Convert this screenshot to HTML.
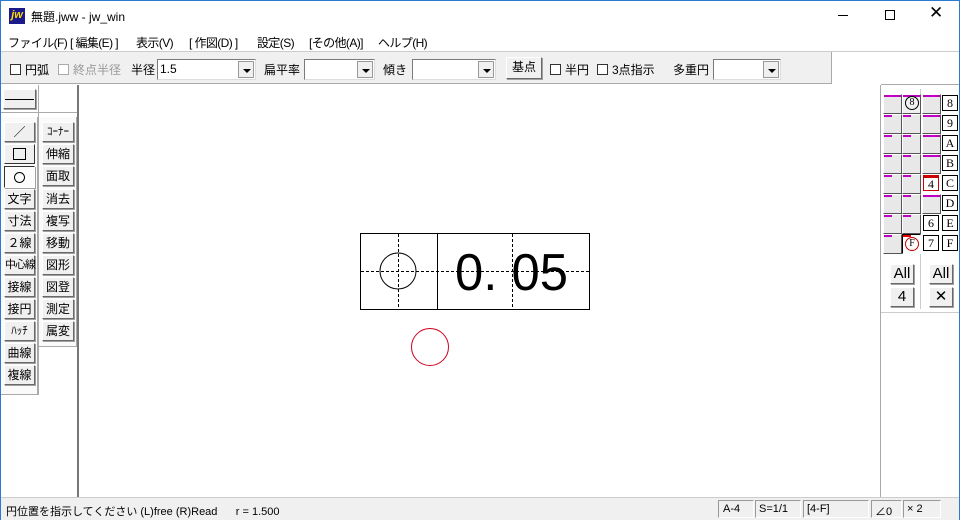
<!DOCTYPE html><html><head><meta charset="utf-8"><style>
*{margin:0;padding:0;box-sizing:border-box}
body{width:960px;height:520px;position:relative;overflow:hidden;background:#fff;font-family:"Liberation Sans","Noto Sans CJK JP",sans-serif;font-size:12px;color:#000}
.a{position:absolute}
.btn{position:absolute;background:#f0f0f0;border:1px solid;border-color:#fff #696969 #696969 #fff;box-shadow:1px 1px 0 #a0a0a0;text-align:center;font-size:12px;line-height:19px;white-space:nowrap}
.chk{display:inline-block;width:11px;height:11px;border:1px solid #333;background:#fff;vertical-align:-1px;margin-right:4px}
.cb{position:absolute;height:21px;background:#fff;border:1px solid #7a7a7a;border-right-color:#ddd;border-bottom-color:#ddd;font-size:12px;line-height:18px;padding-left:2px}
.cb i{position:absolute;right:1px;top:1px;width:16px;height:17px;background:#f0f0f0;border:1px solid #999}
.cb i:after{content:"";position:absolute;left:4px;top:7px;border:4px solid transparent;border-top:4px solid #000;border-bottom:0}
.r{position:absolute;width:19px;height:20px;background:#e8e8e8;border:1px solid;border-color:#fff #555 #555 #fff}
.p{position:absolute;top:0;left:0;height:2px;background:#c000c0}
.lb{position:absolute;width:16px;height:16px;border:1px solid #000;background:#fff;font-family:"Liberation Serif",serif;font-size:12px;line-height:14px;text-align:center}
.m{position:absolute;top:34px;letter-spacing:-0.6px;white-space:nowrap}
</style></head><body>
<div class="a" style="left:0;top:0;width:1px;height:520px;background:#2b79d0"></div>
<div class="a" style="right:0;top:0;width:1px;height:520px;background:#2b79d0"></div>
<div class="a" style="left:0;top:0;width:960px;height:1px;background:#2b79d0"></div>
<div class="a" style="left:9px;top:8px;width:16px;height:16px;background:#1a1a8a;color:#ffd700;font-weight:bold;font-style:italic;font-size:11px;line-height:15px;text-align:center">jw</div>
<div class="a" style="left:31px;top:8px;font-size:12px">無題.jww - jw_win</div>
<div class="a" style="left:838px;top:15px;width:10px;height:1px;background:#000"></div>
<div class="a" style="left:885px;top:10px;width:10px;height:10px;border:1px solid #000"></div>
<div class="a" style="left:929px;top:3px;font-size:17px;font-weight:300">✕</div>
<div class="m" style="left:8px">ファイル(F)</div>
<div class="m" style="left:70px">[ 編集(E) ]</div>
<div class="m" style="left:136px">表示(V)</div>
<div class="m" style="left:189px">[ 作図(D) ]</div>
<div class="m" style="left:257px">設定(S)</div>
<div class="m" style="left:309px">[その他(A)]</div>
<div class="m" style="left:378px">ヘルプ(H)</div>
<div class="a" style="left:1px;top:51px;width:958px;height:1px;background:#ccc"></div>
<div class="a" style="left:1px;top:52px;width:831px;height:32px;background:#f0f0f0;border-right:1px solid #aaa;border-bottom:1px solid #aaa"></div>
<div class="a" style="left:10px;top:61px"><span class="chk"></span>円弧</div>
<div class="a" style="left:58px;top:61px;color:#999"><span class="chk" style="border-color:#aaa"></span>終点半径</div>
<div class="a" style="left:131px;top:61px">半径</div>
<div class="cb" style="left:157px;top:59px;width:99px">1.5<i></i></div>
<div class="a" style="left:264px;top:61px">扁平率</div>
<div class="cb" style="left:304px;top:59px;width:71px"><i></i></div>
<div class="a" style="left:383px;top:61px">傾き</div>
<div class="cb" style="left:412px;top:59px;width:84px"><i></i></div>
<div class="btn" style="left:506px;top:57px;width:36px;height:22px;line-height:19px">基点</div>
<div class="a" style="left:550px;top:61px"><span class="chk"></span>半円</div>
<div class="a" style="left:597px;top:61px"><span class="chk"></span>3点指示</div>
<div class="a" style="left:673px;top:61px">多重円</div>
<div class="cb" style="left:713px;top:59px;width:68px"><i></i></div>
<div class="a" style="left:38px;top:85px;width:1px;height:310px;background:#aaa"></div>
<div class="a" style="left:1px;top:112px;width:76px;height:1px;background:#aaa"></div>
<div class="a" style="left:77px;top:85px;width:2px;height:412px;background:#777"></div>
<div class="btn" style="left:3px;top:89px;width:33px;height:20px"><div class="a" style="left:1px;top:9px;width:29px;height:1px;background:#000"></div></div>
<div class="a" style="left:1px;top:117px;width:37px;height:278px;border-right:1px solid #aaa;border-bottom:1px solid #aaa;background:#fafafa"></div>
<div class="a" style="left:39px;top:117px;width:38px;height:230px;border-right:1px solid #aaa;border-bottom:1px solid #aaa;background:#fafafa"></div>
<div class="btn" style="left:4px;top:122px;width:31px;height:20px">／</div>
<div class="btn" style="left:4px;top:144px;width:31px;height:20px;box-shadow:none;border-color:#fff #333 #333 #fff"><div class="a" style="left:8px;top:3px;width:13px;height:12px;border:1px solid #000"></div></div>
<div class="btn" style="left:4px;top:166px;width:31px;height:22px;background:#fcfcfc;border-color:#333 #fff #fff #333"><div class="a" style="left:9px;top:5px;width:11px;height:11px;border:1px solid #000;border-radius:50%"></div></div>
<div class="btn" style="left:4px;top:189px;width:31px;height:20px">文字</div>
<div class="btn" style="left:4px;top:211px;width:31px;height:20px">寸法</div>
<div class="btn" style="left:4px;top:233px;width:31px;height:20px">２線</div>
<div class="btn" style="left:4px;top:255px;width:31px;height:20px;font-size:11px;letter-spacing:-1px">中心線</div>
<div class="btn" style="left:4px;top:277px;width:31px;height:20px">接線</div>
<div class="btn" style="left:4px;top:299px;width:31px;height:20px">接円</div>
<div class="btn" style="left:4px;top:321px;width:31px;height:20px;font-size:11px">ﾊｯﾁ</div>
<div class="btn" style="left:4px;top:343px;width:31px;height:20px">曲線</div>
<div class="btn" style="left:4px;top:365px;width:31px;height:20px">複線</div>
<div class="btn" style="left:42px;top:122px;width:32px;height:20px;font-size:11px">ｺｰﾅｰ</div>
<div class="btn" style="left:42px;top:144px;width:32px;height:20px">伸縮</div>
<div class="btn" style="left:42px;top:166px;width:32px;height:20px">面取</div>
<div class="btn" style="left:42px;top:189px;width:32px;height:20px">消去</div>
<div class="btn" style="left:42px;top:211px;width:32px;height:20px">複写</div>
<div class="btn" style="left:42px;top:233px;width:32px;height:20px">移動</div>
<div class="btn" style="left:42px;top:255px;width:32px;height:20px">図形</div>
<div class="btn" style="left:42px;top:277px;width:32px;height:20px">図登</div>
<div class="btn" style="left:42px;top:299px;width:32px;height:20px">測定</div>
<div class="btn" style="left:42px;top:321px;width:32px;height:20px">属変</div>
<svg class="a" style="left:79px;top:85px" width="801" height="412">
<g transform="translate(-79,-85)">
<rect x="360.5" y="233.5" width="229" height="76" fill="none" stroke="#000"/>
<line x1="437.5" y1="233" x2="437.5" y2="310" stroke="#000"/>
<g stroke="#000" stroke-dasharray="3,2">
<line x1="361" y1="271.5" x2="589" y2="271.5"/>
<line x1="398.5" y1="234" x2="398.5" y2="309"/>
<line x1="512.5" y1="234" x2="512.5" y2="309"/>
</g>
<circle cx="398" cy="271" r="18" fill="none" stroke="#000"/>
<text x="455" y="290" font-family="Liberation Sans,sans-serif" font-size="52" textLength="113" lengthAdjust="spacingAndGlyphs">0. 05</text>
<circle cx="430" cy="347" r="18.5" fill="none" stroke="#d00020"/>
</g></svg>
<div class="a" style="left:880px;top:85px;width:1px;height:412px;background:#aaa"></div>
<div class="a" style="left:920px;top:89px;width:1px;height:220px;background:#ccc"></div>
<div class="a" style="left:881px;top:84px;width:78px;height:1px;background:#aaa"></div>
<div id="rp"></div>
<script>
var h='';
var lab4=['8','9','A','B','C','D','E','F'];
for(var i=0;i<8;i++){var y=94+i*20;
 h+='<div class="r" style="left:883px;top:'+y+'px"><div class="p" style="width:'+(i==0?17:8)+'px"></div></div>';
 if(i==0) h+='<div class="r" style="left:902px;top:'+y+'px;background:#f0f0f0"><div class="p" style="width:17px"></div><div class="a" style="left:2px;top:1px;width:14px;height:14px;border:1px solid #000;border-radius:50%;font-size:10px;line-height:12px;text-align:center;font-family:Liberation Serif,serif">8</div></div>';
 else if(i==7) h+='<div class="r" style="left:902px;top:'+y+'px;background:#fff;border-color:#000 #fff #fff #000"><div class="p" style="width:8px;background:#e00"></div><div class="a" style="left:2px;top:2px;width:14px;height:14px;border:1px solid #c00;border-radius:50%;font-size:10px;line-height:12px;text-align:center;font-family:Liberation Serif,serif">F</div></div>';
 else h+='<div class="r" style="left:902px;top:'+y+'px"><div class="p" style="width:8px"></div></div>';
 if(i==4) h+='<div class="lb" style="left:923px;top:'+(y+1)+'px;border:1px solid #c00;border-top:3px solid #c00;line-height:12px">4</div>';
 else if(i==6) h+='<div class="lb" style="left:923px;top:'+(y+1)+'px">6</div>';
 else if(i==7) h+='<div class="lb" style="left:923px;top:'+(y+1)+'px">7</div>';
 else h+='<div class="r" style="left:922px;top:'+y+'px"><div class="p" style="width:'+(i<4||i==5?17:8)+'px"></div></div>';
 h+='<div class="lb" style="left:942px;top:'+(y+1)+'px">'+lab4[i]+'</div>';
}
document.getElementById('rp').innerHTML=h;
</script>
<div class="btn" style="left:890px;top:264px;width:24px;height:20px;font-size:15px;line-height:18px">All</div>
<div class="btn" style="left:929px;top:264px;width:24px;height:20px;font-size:15px;line-height:18px">All</div>
<div class="btn" style="left:890px;top:287px;width:24px;height:20px;font-size:15px;line-height:18px">4</div>
<div class="btn" style="left:929px;top:287px;width:24px;height:20px;font-size:15px;line-height:18px">✕</div>
<div class="a" style="left:881px;top:312px;width:78px;height:1px;background:#ccc"></div>
<div class="a" style="left:1px;top:497px;width:958px;height:23px;background:#f0f0f0;border-top:1px solid #ccc"></div>
<div class="a" style="left:6px;top:503px;font-size:11px">円位置を指示してください (L)free (R)Read&nbsp;&nbsp;&nbsp;&nbsp;&nbsp; r = 1.500</div>
<div class="a" style="left:718px;top:500px;width:36px;height:18px;border:1px solid;border-color:#999 #fff #fff #999;font-size:11px;padding:2px 4px">A-4</div>
<div class="a" style="left:755px;top:500px;width:46px;height:18px;border:1px solid;border-color:#999 #fff #fff #999;font-size:11px;padding:2px 3px">S=1/1</div>
<div class="a" style="left:803px;top:500px;width:66px;height:18px;border:1px solid;border-color:#999 #fff #fff #999;font-size:11px;padding:2px 3px">[4-F]</div>
<div class="a" style="left:871px;top:500px;width:31px;height:18px;border:1px solid;border-color:#999 #fff #fff #999;font-size:11px;padding:2px 3px">∠0</div>
<div class="a" style="left:903px;top:500px;width:38px;height:18px;border:1px solid;border-color:#999 #fff #fff #999;font-size:11px;padding:2px 3px">× 2</div>
</body></html>
